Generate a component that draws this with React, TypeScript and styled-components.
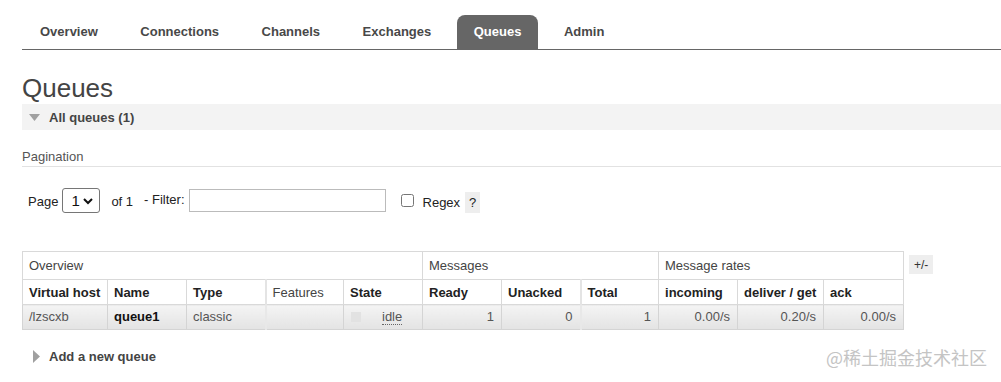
import React from 'react'
import styled, { createGlobalStyle } from 'styled-components'

const GlobalStyle = createGlobalStyle`
  body {
    margin: 0;
    background: #fff;
    font-family: 'Liberation Sans', Arial, sans-serif;
    font-size: 13px;
    color: #484848;
  }
`

const Page = styled.div`
  position: relative;
  padding: 15px 0 0 22px;
  height: 367px;
  overflow: hidden;
`

const Nav = styled.ul`
  display: flex;
  gap: 8.5px;
  margin: 0;
  padding: 0 0 0 1px;
  list-style: none;
  border-bottom: 1px solid #666;
`

const Tab = styled.li<{ $active?: boolean }>`
  padding: 0 17px;
  height: 34px;
  line-height: 34px;
  font-weight: bold;
  font-size: 13px;
  border-radius: 8px 8px 0 0;
  color: ${(p) => (p.$active ? '#fff' : '#484848')};
  background: ${(p) => (p.$active ? '#666' : 'transparent')};
`

const Title = styled.h1`
  margin: 25px 0 3px;
  font-size: 26px;
  line-height: 26px;
  font-weight: normal;
  color: #444;
`

const SectionBar = styled.div<{ $bg?: string }>`
  display: flex;
  align-items: center;
  gap: 9px;
  height: 26px;
  padding-left: 7px;
  background: ${(p) => p.$bg || 'transparent'};
  font-weight: bold;
  font-size: 13px;
  color: #444;
`

const SubHead = styled.h3`
  margin: 18px 0 0;
  font-size: 13px;
  line-height: 18px;
  font-weight: normal;
  color: #555;
  border-bottom: 1px solid #e2e2e2;
`

const FilterRow = styled.div`
  display: flex;
  align-items: center;
  height: 25px;
  margin: 21px 0 0 6px;
  color: #222;
`

const SelectWrap = styled.div`
  position: relative;
  margin-left: 4px;

  svg {
    position: absolute;
    right: 7px;
    top: 10px;
    pointer-events: none;
  }
`

const Select = styled.select`
  appearance: none;
  width: 38px;
  height: 25px;
  padding: 0 0 0 8px;
  border: 1px solid #767676;
  border-radius: 3px;
  background: #fff;
  font-family: inherit;
  font-size: 15px;
  color: #111;
`

const Label = styled.span<{ $ml?: number; $dy?: number }>`
  margin-left: ${(p) => p.$ml || 0}px;
  position: relative;
  top: ${(p) => p.$dy || 0}px;
`

const TextInput = styled.input`
  width: 197px;
  height: 23px;
  box-sizing: border-box;
  margin-left: 4px;
  border: 1px solid #bbb;
`

const Check = styled.input`
  margin: 0 0 0 15px;
  width: 13px;
  height: 13px;
`

const Help = styled.span`
  margin-left: 5px;
  padding: 3px 4px;
  background: #eee;
  position: relative;
  top: 2px;
`

const TableRow = styled.div`
  display: flex;
  align-items: flex-start;
  gap: 5px;
  margin-top: 38px;
`

const Grid = styled.table`
  border-collapse: collapse;
  table-layout: fixed;
  width: 881px;
  font-size: 13px;
`

const GroupTh = styled.th`
  height: 27px;
  padding: 0 6px;
  text-align: left;
  font-weight: normal;
  color: #444;
  border: 1px solid #d9d9d9;
`

const ColTh = styled.th<{ $plain?: boolean; $sep?: boolean }>`
  height: 24px;
  padding: 0 6px;
  text-align: left;
  font-weight: ${(p) => (p.$plain ? 'normal' : 'bold')};
  color: ${(p) => (p.$plain ? '#444' : '#222')};
  border: 1px solid #d9d9d9;
  border-left: ${(p) => (p.$sep ? '2px solid #e4e4e4' : '1px solid #d9d9d9')};
  white-space: nowrap;
`

const Td = styled.td<{ $num?: boolean; $strong?: boolean; $sep?: boolean }>`
  height: 22px;
  padding: 0 ${(p) => (p.$num ? 7 : 6)}px 2px 6px;
  text-align: ${(p) => (p.$num ? 'right' : 'left')};
  font-weight: ${(p) => (p.$strong ? 'bold' : 'normal')};
  color: ${(p) => (p.$strong ? '#111' : '#555')};
  background: linear-gradient(#f4f4f4, #e3e3e3);
  border: 1px solid #d4d4d4;
  border-left: ${(p) => (p.$sep ? '2px solid #e8e8e8' : '1px solid #d4d4d4')};
`

const StateBox = styled.span`
  display: inline-block;
  width: 10px;
  height: 10px;
  background: #e2e2e2;
  vertical-align: -1px;
  margin: 0 21px 0 1px;
`

const Idle = styled.abbr`
  text-decoration: none;
  border-bottom: 1px dotted #666;
  color: #555;
`

const ToggleBtn = styled.button`
  margin-top: 4px;
  padding: 0 5px;
  height: 19px;
  border: none;
  background: #eee;
  font-family: inherit;
  font-size: 12px;
  color: #333;
`

const AddBar = styled(SectionBar)`
  margin-top: 13px;
  padding-left: 11px;
`

const Watermark = styled.div`
  position: absolute;
  right: 14px;
  top: 344px;
  font-family: 'Noto Sans CJK SC', sans-serif;
  font-size: 18px;
  color: #c4c4c4;
`

const widths = [85, 79, 79, 78, 79, 79, 79, 78, 79, 86, 80]

const Down = () => (
  <svg width="11" height="7" viewBox="0 0 11 7">
    <path d="M0 0 L11 0 L5.5 7 Z" fill="#a0a0a0" />
  </svg>
)

const Right = () => (
  <svg width="7" height="13" viewBox="0 0 7 13">
    <path d="M0 0 L7 6.5 L0 13 Z" fill="#a0a0a0" />
  </svg>
)

const App = () => {
  const tabs = ['Overview', 'Connections', 'Channels', 'Exchanges', 'Queues', 'Admin']
  return (
    <Page>
      <GlobalStyle />
      <Nav>
        {tabs.map((t) => (
          <Tab key={t} $active={t === 'Queues'}>
            {t}
          </Tab>
        ))}
      </Nav>
      <Title>Queues</Title>
      <SectionBar $bg="#f3f3f3">
        <Down />
        All queues (1)
      </SectionBar>
      <SubHead>Pagination</SubHead>
      <FilterRow>
        <Label $dy={1}>Page</Label>
        <SelectWrap>
          <Select defaultValue="1">
            <option value="1">1</option>
          </Select>
          <svg width="10" height="7" viewBox="0 0 10 7">
            <path d="M1 1 L5 5 L9 1" stroke="#111" strokeWidth="2" fill="none" />
          </svg>
        </SelectWrap>
        <Label $ml={11} $dy={1}>of 1</Label>
        <Label $ml={11} $dy={-1}>- Filter:</Label>
        <TextInput type="text" />
        <Check type="checkbox" />
        <Label $ml={9} $dy={2}>Regex</Label>
        <Help>?</Help>
      </FilterRow>
      <TableRow>
        <Grid>
          <colgroup>
            {widths.map((w, i) => (
              <col key={i} style={{ width: w }} />
            ))}
          </colgroup>
          <thead>
            <tr>
              <GroupTh colSpan={5}>Overview</GroupTh>
              <GroupTh colSpan={3}>Messages</GroupTh>
              <GroupTh colSpan={3}>Message rates</GroupTh>
            </tr>
            <tr>
              <ColTh>Virtual host</ColTh>
              <ColTh>Name</ColTh>
              <ColTh>Type</ColTh>
              <ColTh $plain $sep>Features</ColTh>
              <ColTh>State</ColTh>
              <ColTh>Ready</ColTh>
              <ColTh>Unacked</ColTh>
              <ColTh $sep>Total</ColTh>
              <ColTh>incoming</ColTh>
              <ColTh>deliver / get</ColTh>
              <ColTh>ack</ColTh>
            </tr>
          </thead>
          <tbody>
            <tr>
              <Td>/lzscxb</Td>
              <Td $strong>queue1</Td>
              <Td>classic</Td>
              <Td $sep></Td>
              <Td>
                <StateBox />
                <Idle title="idle">idle</Idle>
              </Td>
              <Td $num>1</Td>
              <Td $num>0</Td>
              <Td $num $sep>1</Td>
              <Td $num>0.00/s</Td>
              <Td $num>0.20/s</Td>
              <Td $num>0.00/s</Td>
            </tr>
          </tbody>
        </Grid>
        <ToggleBtn type="button">+/-</ToggleBtn>
      </TableRow>
      <AddBar>
        <Right />
        Add a new queue
      </AddBar>
      <Watermark>@稀土掘金技术社区</Watermark>
    </Page>
  )
}

export default App
